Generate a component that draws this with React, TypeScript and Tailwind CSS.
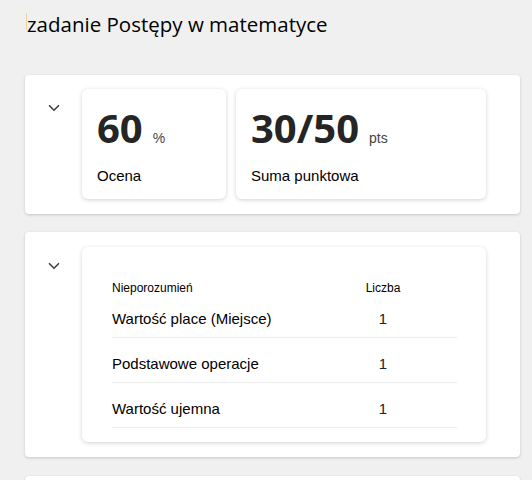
import { ChevronDown } from 'lucide-react';

const misconceptions = [
  { name: 'Wartość place (Miejsce)', count: 1 },
  { name: 'Podstawowe operacje', count: 1 },
  { name: 'Wartość ujemna', count: 1 },
];

function Chevron() {
  return (
    <div className="w-[57px] shrink-0 flex justify-center pt-[10px]">
      <ChevronDown className="w-[18px] h-[18px] text-[#444]" strokeWidth={2.2} />
    </div>
  );
}

function Stat({ value, unit, label, width }: { value: string; unit: string; label: string; width: string }) {
  return (
    <div className={`${width} h-[110px] bg-white rounded-md shadow-[0_1px_4px_rgba(0,0,0,0.18)] pl-[15px] pt-[16px]`}>
      <div className="flex items-baseline">
        <span className="text-[40px] leading-[46px] font-bold text-[#252525] font-['Open_Sans',sans-serif]">{value}</span>
        <span className="ml-[10px] text-[14px] text-[#444]">{unit}</span>
      </div>
      <div className="mt-[14px] text-[15px] text-black">{label}</div>
    </div>
  );
}

export default function App() {
  return (
    <div className="min-h-[480px] bg-[#f0f0f0] font-['Liberation_Sans',Arial,sans-serif] overflow-hidden">
      <h1 className="pt-[12px] pl-[26px] h-[75px] text-[20.5px] leading-[24px] text-black flex font-['Open_Sans',sans-serif]">
        <span className="inline-block w-px h-[17px] bg-[#efcf9f] mt-[1px]" />
        <span>zadanie Postępy w matematyce</span>
      </h1>

      <div className="ml-[25px] w-[495px] bg-white rounded-[4px] shadow-[0_1px_3px_rgba(0,0,0,0.18)] flex pt-[14px] pb-[15px]">
        <Chevron />
        <div className="flex gap-[10px]">
          <Stat value="60" unit="%" label="Ocena" width="w-[144px]" />
          <Stat value="30/50" unit="pts" label="Suma punktowa" width="w-[250px]" />
        </div>
      </div>

      <div className="ml-[25px] mt-[18px] w-[495px] bg-white rounded-[4px] shadow-[0_1px_3px_rgba(0,0,0,0.18)] flex pt-[15px] pb-[15px]">
        <Chevron />
        <div className="w-[404px] h-[195px] bg-white rounded-md shadow-[0_1px_4px_rgba(0,0,0,0.18)] pl-[30px] pr-[29px] pt-[35px]">
          <div className="flex text-[12px] leading-[12px] text-black h-[11px]">
            <span className="flex-1">Nieporozumień</span>
            <span className="w-[40px] mr-[54px] text-center">Liczba</span>
          </div>
          {misconceptions.map((m) => (
            <div key={m.name} className="flex h-[45px] pt-[17px] leading-[18px] border-b border-[#ececec] text-[15px] text-black">
              <span className="flex-1">{m.name}</span>
              <span className="w-[40px] mr-[54px] text-center text-[#222]">{m.count}</span>
            </div>
          ))}
        </div>
      </div>

      <div className="ml-[25px] mt-[19px] w-[495px] h-[40px] bg-white rounded-[4px] shadow-[0_1px_3px_rgba(0,0,0,0.18)]" />
    </div>
  );
}
